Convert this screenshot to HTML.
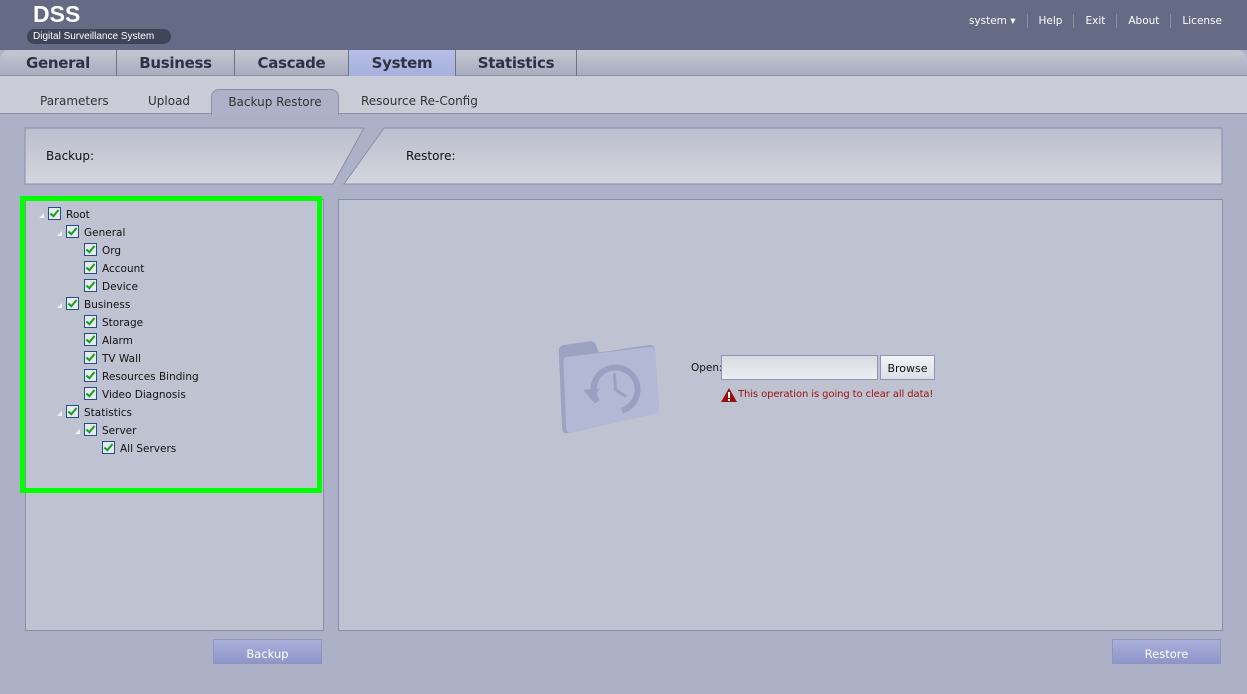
<!DOCTYPE html>
<html><head><meta charset="utf-8"><style>
*{margin:0;padding:0;box-sizing:border-box}
body{width:1247px;height:694px;overflow:hidden;background:#acb1c7;font-family:"DejaVu Sans","Liberation Sans",sans-serif;position:relative;font-size:11px;color:#111}
.abs{position:absolute}
#hdr{left:0;top:0;width:1247px;height:50px;background:#656a85}
#logo{left:33px;top:1px;font:bold 23px "Liberation Sans",sans-serif;color:#fff;letter-spacing:0px}
#sub{left:27px;top:29px;width:144px;height:15px;border-radius:8px;background:#3f4458;color:#fff;font:10px "Liberation Sans",sans-serif;padding-left:6px;line-height:15px}
#links{right:14px;top:14px;color:#fff;font-size:10.5px;display:flex}
#links span{padding:0 11px;border-left:1px solid #8a8fa8;line-height:14px}
#links span:first-child{border:none}
#tabs{left:0;top:50px;width:1247px;height:26px;background:linear-gradient(#c4c7d3,#a8acbd);border-radius:10px 10px 0 0;border-bottom:1px solid #8c90a3}
.tab{top:50px;height:26px;border-right:1px solid #6e7286;font:bold 15px "DejaVu Sans",sans-serif;color:#2e3244;text-align:center;line-height:26px;letter-spacing:-0.3px}
#subrow{left:0;top:76px;width:1247px;height:38px;background:#c9cbd6;border-bottom:1px solid #8c90a3}
.st{top:94px;font-size:12px;color:#333}
#bract{left:211px;top:89px;width:128px;height:26px;background:#adb2c8;border:1px solid #8c90a3;border-bottom:none;border-radius:8px 8px 0 0;text-align:center;line-height:24px;font-size:12px;color:#333}
.panel{background:#bfc2d1;border:1px solid #8a8ea4}
.row{height:18px;line-height:18px;font-size:10.5px;position:absolute;white-space:nowrap}
.cb{display:inline-block;width:13px;height:13px;border:1px solid #1f4e8a;background:#e8eaef;vertical-align:-2px;margin-right:5px;position:relative}
.cb:after{content:"";position:absolute;left:3px;top:0px;width:3px;height:7px;border:solid #14a21a;border-width:0 2px 2px 0;transform:rotate(40deg)}
.ex{position:absolute;width:0;height:0;border-left:5px solid transparent;border-bottom:5px solid #f2f2f2;top:7px}
.btn{top:639px;width:109px;height:25px;border:1px solid #8f94b8;background:linear-gradient(#aab0da,#8d95cb);color:#fff;text-align:center;line-height:28px;font-size:11.5px}
</style></head><body>
<div id="hdr" class="abs"></div>
<div id="logo" class="abs">DSS</div>
<div id="sub" class="abs">Digital Surveillance System</div>
<div id="links" class="abs"><span>system ▾</span><span>Help</span><span>Exit</span><span>About</span><span>License</span></div>
<div id="tabs" class="abs"></div>
<div class="abs tab" style="left:0;width:117px">General</div>
<div class="abs tab" style="left:117px;width:118px">Business</div>
<div class="abs tab" style="left:235px;width:114px">Cascade</div>
<div class="abs tab" style="left:349px;width:107px;background:linear-gradient(#b7bfe6,#a6b0db)">System</div>
<div class="abs tab" style="left:456px;width:121px">Statistics</div>
<div id="subrow" class="abs"></div>
<div class="abs st" style="left:40px">Parameters</div>
<div class="abs st" style="left:148px">Upload</div>
<div id="bract" class="abs">Backup Restore</div>
<div class="abs st" style="left:361px">Resource Re-Config</div>
<svg class="abs" style="left:0;top:0" width="1247" height="200">
<defs><linearGradient id="g" x1="0" y1="0" x2="0" y2="1"><stop offset="0" stop-color="#bbbecd"/><stop offset="1" stop-color="#d4d6de"/></linearGradient></defs>
<polygon points="25,128 364,128 333,184 25,184" fill="url(#g)" stroke="#8a8ea4"/>
<polygon points="384,128 1222,128 1222,184 344,184" fill="url(#g)" stroke="#8a8ea4"/>
</svg>
<div class="abs" style="left:46px;top:149px;font-size:12px">Backup:</div>
<div class="abs" style="left:406px;top:149px;font-size:12px">Restore:</div>
<div class="abs panel" style="left:25px;top:199px;width:299px;height:432px"></div>
<div class="abs panel" style="left:338px;top:199px;width:885px;height:432px"></div>
<div class="abs" style="left:20px;top:196px;width:302px;height:297px;border:5px solid #00ff00"></div>
<div class="row" style="left:48px;top:206px"><i class="ex" style="left:-9px"></i><span class="cb"></span>Root</div>
<div class="row" style="left:66px;top:224px"><i class="ex" style="left:-9px"></i><span class="cb"></span>General</div>
<div class="row" style="left:84px;top:242px"><span class="cb"></span>Org</div>
<div class="row" style="left:84px;top:260px"><span class="cb"></span>Account</div>
<div class="row" style="left:84px;top:278px"><span class="cb"></span>Device</div>
<div class="row" style="left:66px;top:296px"><i class="ex" style="left:-9px"></i><span class="cb"></span>Business</div>
<div class="row" style="left:84px;top:314px"><span class="cb"></span>Storage</div>
<div class="row" style="left:84px;top:332px"><span class="cb"></span>Alarm</div>
<div class="row" style="left:84px;top:350px"><span class="cb"></span>TV Wall</div>
<div class="row" style="left:84px;top:368px"><span class="cb"></span>Resources Binding</div>
<div class="row" style="left:84px;top:386px"><span class="cb"></span>Video Diagnosis</div>
<div class="row" style="left:66px;top:404px"><i class="ex" style="left:-9px"></i><span class="cb"></span>Statistics</div>
<div class="row" style="left:84px;top:422px"><i class="ex" style="left:-9px"></i><span class="cb"></span>Server</div>
<div class="row" style="left:102px;top:440px"><span class="cb"></span>All Servers</div>
<svg class="abs" style="left:553px;top:330px" width="110" height="104" viewBox="0 0 110 104">
<g transform="rotate(-4 55 52)">
<path d="M8 18 Q8 12 14 12 L40 10 Q45 10 46 16 L48 22 L98 18 Q104 18 104 24 L104 80 Q104 86 98 87 L12 100 Q6 101 6 95 Z" fill="#9ca2c2"/>
<path d="M12 28 Q12 24 17 24 L99 20 Q104 20 104 25 L104 80 Q104 86 98 87 L16 100 Q10 101 10 95 Z" fill="#b3b8d4"/>
<circle cx="62" cy="60" r="22" fill="none" stroke="#9aa0c0" stroke-width="6" stroke-dasharray="110 30" transform="rotate(150 62 60)"/>
<path d="M30 58 L46 58 L38 70 Z" fill="#9aa0c0"/>
<path d="M62 44 L62 60 L72 68" stroke="#9aa0c0" stroke-width="3" fill="none"/>
</g>
</svg>
<div class="abs" style="left:691px;top:362px;font-size:10.5px">Open:</div>
<div class="abs" style="left:721px;top:355px;width:157px;height:25px;border:1px solid #8f94b8;background:linear-gradient(#d8dae2,#eceef2)"></div>
<div class="abs" style="left:880px;top:355px;width:55px;height:25px;border:1px solid #8f94b8;background:linear-gradient(#f2f3f6,#dcdee6);text-align:center;line-height:26px;font-size:11px">Browse</div>
<svg class="abs" style="left:721px;top:388px" width="16" height="14"><path d="M8 0 L16 14 L0 14 Z" fill="#9a1010"/><rect x="7" y="4" width="2" height="6" fill="#fff"/><rect x="7" y="11" width="2" height="2" fill="#fff"/></svg>
<div class="abs" style="left:738px;top:389px;font-size:10px;color:#9a1010;letter-spacing:-0.1px">This operation is going to clear all data!</div>
<div class="abs btn" style="left:213px">Backup</div>
<div class="abs btn" style="left:1112px">Restore</div>
</body></html>
